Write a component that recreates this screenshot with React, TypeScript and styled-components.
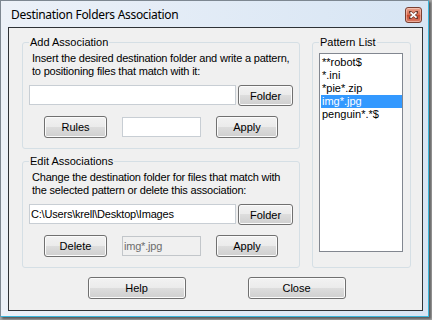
import styled, { createGlobalStyle } from 'styled-components';

const GlobalStyle = createGlobalStyle`
  html, body {
    margin: 0;
    padding: 0;
  }
  body {
    width: 432px;
    height: 320px;
    overflow: hidden;
    background: #a6a6a6;
    font-family: "Liberation Sans", Arial, sans-serif;
    font-size: 11px;
    color: #000;
  }
`;

const Window = styled.div`
  box-sizing: border-box;
  width: 429px;
  height: 317px;
  display: flex;
  flex-direction: column;
  padding: 0 5px 5px 7px;
  border: 1px solid #7d8791;
  border-right-color: #3ab6dc;
  border-bottom-color: #3ab6dc;
  background: linear-gradient(to right, #ecf1f8, #d7e5f4);
  box-shadow: 2px 2px 2px rgba(0, 0, 0, 0.45);
`;

const TitleBar = styled.div`
  height: 26px;
  display: flex;
  align-items: flex-start;
  padding-left: 3px;
`;

const Title = styled.div`
  font-family: "Noto Sans", "Liberation Sans", sans-serif;
  font-size: 12px;
  line-height: 16px;
  letter-spacing: -0.3px;
  padding-top: 6px;
  color: #000;
`;

const CloseBox = styled.div`
  box-sizing: border-box;
  width: 17px;
  height: 16px;
  margin: 6px 1px 0 auto;
  border: 1px solid #7a4032;
  border-radius: 3px;
  display: flex;
  align-items: center;
  justify-content: center;
  background: linear-gradient(#eaa792 0%, #d8694c 48%, #c8462a 52%, #d9806a 100%);
  box-shadow: inset 0 0 0 1px rgba(255, 220, 210, 0.5);
`;

const Client = styled.div`
  flex: 1;
  display: flex;
  flex-direction: column;
  padding: 8px 11px 0 13px;
  border: 1px solid #2e3236;
  background: #f0f0f0;
`;

const TopRow = styled.div`
  display: flex;
  gap: 12px;
  height: 232px;
`;

const LeftCol = styled.div`
  width: 278px;
  display: flex;
  flex-direction: column;
  gap: 6px;
`;

const Group = styled.fieldset<{ $w: number; $h: number }>`
  box-sizing: border-box;
  width: ${(p) => p.$w}px;
  height: ${(p) => p.$h}px;
  min-width: 0;
  margin: 0;
  padding: 4px 6px 0 6px;
  border: 1px solid #d5dfe5;
  border-radius: 3px;
`;

const Legend = styled.legend`
  padding: 0 1px;
  font-size: 11px;
  line-height: 12px;
`;

const Description = styled.div`
  margin: 0 0 7px 3px;
  line-height: 13px;
  letter-spacing: -0.2px;
  white-space: nowrap;
`;

const FieldRow = styled.div`
  display: flex;
  align-items: flex-start;
  gap: 2px;
`;

const ActionRow = styled.div`
  display: flex;
  align-items: center;
  gap: 15px;
  margin-top: 10px;
  padding-left: 15px;
`;

const TextBox = styled.div<{ $w: number; $disabled?: boolean }>`
  box-sizing: border-box;
  width: ${(p) => p.$w}px;
  height: 20px;
  padding: 0 1px;
  border: 1px solid ${(p) => (p.$disabled ? '#c2c6ca' : '#c8ced4')};
  background: ${(p) => (p.$disabled ? '#f0f0f0' : '#fff')};
  color: ${(p) => (p.$disabled ? '#6d6d6d' : '#000')};
  line-height: 18px;
  letter-spacing: -0.2px;
  white-space: nowrap;
  overflow: hidden;
`;

const Button = styled.button<{ $w: number; $h?: number }>`
  box-sizing: border-box;
  width: ${(p) => p.$w}px;
  height: ${(p) => p.$h ?? 22}px;
  margin: 0;
  padding: 0;
  border: 1px solid #707070;
  border-radius: 3px;
  background: linear-gradient(#f2f2f2 0%, #ebebeb 50%, #dddddd 50%, #cfcfcf 100%);
  box-shadow: inset 0 0 0 1px #fbfbfb;
  font-family: "Liberation Sans", Arial, sans-serif;
  font-size: 11px;
  color: #000;
`;

const ListBox = styled.div`
  box-sizing: border-box;
  width: 84px;
  height: 199px;
  margin-top: 1px;
  padding: 2px 0 0 1px;
  border: 1px solid #828790;
  background: #fff;
`;

const ListItem = styled.div<{ $selected?: boolean }>`
  height: 13px;
  line-height: 13px;
  padding-left: 1px;
  white-space: nowrap;
  background: ${(p) => (p.$selected ? '#3399ff' : 'transparent')};
  color: ${(p) => (p.$selected ? '#fff' : '#000')};
`;

const ButtonBar = styled.div`
  display: flex;
  justify-content: center;
  gap: 62px;
  margin-top: 9px;
`;

const patterns = ['**robot$', '*.ini', '*pie*.zip', 'img*.jpg', 'penguin*.*$'];

export default function App() {
  return (
    <>
      <GlobalStyle />
      <Window>
        <TitleBar>
          <Title>Destination Folders Association</Title>
          <CloseBox>
            <svg width="9" height="8" viewBox="0 0 9 8">
              <path d="M1 1 L8 7 M8 1 L1 7" stroke="#6a3a30" strokeWidth="3" strokeLinecap="square" />
              <path d="M1.5 1.3 L7.5 6.7 M7.5 1.3 L1.5 6.7" stroke="#fff" strokeWidth="1.8" />
            </svg>
          </CloseBox>
        </TitleBar>
        <Client>
          <TopRow>
            <LeftCol>
              <Group $w={278} $h={113}>
                <Legend>Add Association</Legend>
                <Description>
                  Insert the desired destination folder and write a pattern,
                  <br />
                  to positioning files that match with it:
                </Description>
                <FieldRow>
                  <TextBox $w={207} />
                  <Button $w={55} $h={21}>Folder</Button>
                </FieldRow>
                <ActionRow>
                  <Button $w={63}>Rules</Button>
                  <TextBox $w={79} />
                  <Button $w={62}>Apply</Button>
                </ActionRow>
              </Group>
              <Group $w={278} $h={113}>
                <Legend>Edit Associations</Legend>
                <Description>
                  Change the destination folder for files that match with
                  <br />
                  the selected pattern or delete this association:
                </Description>
                <FieldRow>
                  <TextBox $w={207}>C:\Users\krell\Desktop\Images</TextBox>
                  <Button $w={55} $h={21}>Folder</Button>
                </FieldRow>
                <ActionRow>
                  <Button $w={63}>Delete</Button>
                  <TextBox $w={79} $disabled>img*.jpg</TextBox>
                  <Button $w={62}>Apply</Button>
                </ActionRow>
              </Group>
            </LeftCol>
            <Group $w={99} $h={232}>
              <Legend>Pattern List</Legend>
              <ListBox>
                {patterns.map((p) => (
                  <ListItem key={p} $selected={p === 'img*.jpg'}>
                    {p}
                  </ListItem>
                ))}
              </ListBox>
            </Group>
          </TopRow>
          <ButtonBar>
            <Button $w={98}>Help</Button>
            <Button $w={98}>Close</Button>
          </ButtonBar>
        </Client>
      </Window>
    </>
  );
}
